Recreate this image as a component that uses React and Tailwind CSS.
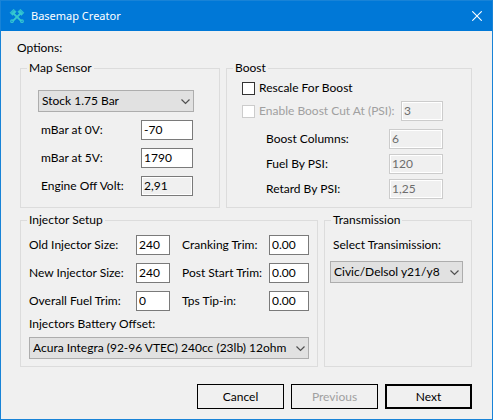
import { useId } from "react";

function Group({ title, className = "", children }) {
  return (
    <fieldset className={`min-w-0 border border-[#dcdcdc] ${className}`}>
      <legend className="ml-1.5 h-4 whitespace-nowrap px-0.5 leading-4">{title}</legend>
      {children}
    </fieldset>
  );
}

function TextBox({ id, value, width, disabled, readOnly, label }) {
  const look = disabled
    ? "border-[#cccccc] bg-[#f0f0f0] text-[#6d6d6d] shadow-[inset_0_0_0_1px_#ffffff]"
    : readOnly
      ? "border-[#7a7a7a] bg-[#f0f0f0] shadow-[inset_0_0_0_1px_#ffffff]"
      : "border-[#7a7a7a] bg-white";
  return (
    <input
      id={id}
      type="text"
      aria-label={label}
      defaultValue={value}
      disabled={disabled}
      readOnly={readOnly}
      className={`h-5 shrink-0 border px-0.5 pb-0.5 leading-4 ${width} ${look}`}
    />
  );
}

function Field({ label, ...box }) {
  const id = useId();
  return (
    <div className="flex h-5 items-center justify-between">
      <label htmlFor={id} className="whitespace-nowrap leading-4">{label}</label>
      <TextBox id={id} {...box} />
    </div>
  );
}

function Dropdown({ id, label, options }) {
  return (
    <div className="relative">
      <select
        id={id}
        aria-label={label}
        className="block h-[22px] w-full appearance-none border border-[#adadad] bg-[#e1e1e1] pl-[3px] pr-[19px] leading-5"
      >
        {options.map((o) => (
          <option key={o}>{o}</option>
        ))}
      </select>
      <svg viewBox="0 0 9 6" className="pointer-events-none absolute right-1 top-[9px] h-1.5 w-[9px]" fill="none" stroke="#505050" strokeWidth="1.2">
        <path d="M0.5 0.5 L4.5 4.5 L8.5 0.5" />
      </svg>
    </div>
  );
}

function Check({ label, disabled }) {
  return (
    <label className={`flex h-4 items-center gap-1 whitespace-nowrap leading-4 ${disabled ? "text-[#a0a0a0]" : ""}`}>
      <input
        type="checkbox"
        disabled={disabled}
        className={`size-[13px] appearance-none border bg-white ${disabled ? "border-[#cccccc]" : "border-[#333333]"}`}
      />
      {label}
    </label>
  );
}

function PistonIcon() {
  return (
    <svg viewBox="0 0 16 16" className="size-4" fill="none" stroke="#35c8cf">
      <path d="M4.5 5.5 L12.3 13.2 M11.5 5.5 L3.7 13.2" strokeWidth="1.8" />
      <path d="M1 4.8 L4.6 1.2 L7.2 3.8 L3.6 7.4 Z M15 4.8 L11.4 1.2 L8.8 3.8 L12.4 7.4 Z" fill="#35c8cf" strokeWidth="0.5" />
      <path d="M1.8 5.6 L5.4 2 M14.2 5.6 L10.6 2" stroke="#1494d4" strokeWidth="0.6" />
      <circle cx="3" cy="13.2" r="1.3" strokeWidth="1.2" />
      <circle cx="13" cy="13.2" r="1.3" strokeWidth="1.2" />
    </svg>
  );
}

export default function App() {
  return (
    <div className="flex min-h-screen flex-col border border-[#1883d7] bg-[#f0f0f0] font-[Lato,sans-serif] text-[12px] text-black">
      <header className="flex h-[30px] items-center bg-[#0078d7] pl-2 pr-2.5 text-white">
        <PistonIcon />
        <h1 className="ml-1.5 flex-1 font-['Noto_Sans',sans-serif] text-[11px] leading-4">Basemap Creator</h1>
        <button type="button" aria-label="Close" className="p-0">
          <svg viewBox="0 0 10 10" className="size-2.5" fill="none" stroke="#ffffff" strokeWidth="1.1">
            <path d="M0.3 0.3 L9.7 9.7 M9.7 0.3 L0.3 9.7" />
          </svg>
        </button>
      </header>

      <main className="pl-[19px] pr-5 pt-[9px]">
        <p className="-ml-[3px] leading-4">Options:</p>

        <div className="mt-1 grid grid-cols-[200fr_246fr] gap-x-1.5">
          <Group title="Map Sensor">
            <div className="flex flex-col gap-2 pb-[11px] pl-[17px] pr-[25px] pt-3.5">
              <Dropdown label="Map sensor" options={["Stock 1.75 Bar"]} />
              <div className="flex flex-col gap-2 pl-[3px] pr-px">
                <Field label="mBar at 0V:" value="-70" width="w-[52px]" />
                <Field label="mBar at 5V:" value="1790" width="w-[52px]" />
                <Field label="Engine Off Volt:" value="2,91" width="w-[52px]" readOnly />
              </div>
            </div>
          </Group>

          <Group title="Boost">
            <div className="flex flex-col gap-[5px] pl-[15px] pr-7 pt-1">
              <Check label="Rescale For Boost" />
              <div className="flex h-5 items-center justify-between">
                <Check label="Enable Boost Cut At (PSI):" disabled />
                <TextBox label="Boost cut pressure" value="3" width="w-[42px]" disabled />
              </div>
              <div className="mt-[3px] flex flex-col gap-[5px] pl-6">
                <Field label="Boost Columns:" value="6" width="w-[54px]" disabled />
                <Field label="Fuel By PSI:" value="120" width="w-[54px]" disabled />
                <Field label="Retard By PSI:" value="1,25" width="w-[54px]" disabled />
              </div>
            </div>
          </Group>
        </div>

        <div className="mt-1 grid grid-cols-[298fr_148fr] gap-x-1.5">
          <Group title="Injector Setup">
            <div className="px-2 pb-[7px] pt-[7px]">
              <div className="grid grid-cols-[141fr_127fr] gap-x-3">
                <div className="flex flex-col gap-2">
                  <Field label="Old Injector Size:" value="240" width="w-[34px]" />
                  <Field label="New Injector Size:" value="240" width="w-[34px]" />
                  <Field label="Overall Fuel Trim:" value="0" width="w-[34px]" />
                </div>
                <div className="flex flex-col gap-2">
                  <Field label="Cranking Trim:" value="0.00" width="w-10" />
                  <Field label="Post Start Trim:" value="0.00" width="w-10" />
                  <Field label="Tps Tip-in:" value="0.00" width="w-10" />
                </div>
              </div>
              <label htmlFor="battery-offset" className="mb-[5px] mt-[5px] block leading-4">Injectors Battery Offset:</label>
              <Dropdown id="battery-offset" options={["Acura Integra (92-96 VTEC) 240cc (23lb) 12ohm"]} />
            </div>
          </Group>

          <Group title="Transmission">
            <div className="pl-[5px] pr-2 pt-[9px]">
              <label htmlFor="transmission" className="mb-2 block whitespace-nowrap pl-[3px] leading-4">Select Transimission:</label>
              <Dropdown id="transmission" options={["Civic/Delsol y21/y8"]} />
            </div>
          </Group>
        </div>

        <div className="mt-[17px] flex justify-end gap-[7px]">
          <button type="button" className="h-[25px] w-[87px] border border-black leading-4">Cancel</button>
          <button type="button" disabled className="h-[25px] w-[87px] border border-black leading-4 text-[#a0a0a0]">Previous</button>
          <button type="button" className="h-[25px] w-[87px] border-2 border-black leading-4">Next</button>
        </div>
      </main>
    </div>
  );
}
